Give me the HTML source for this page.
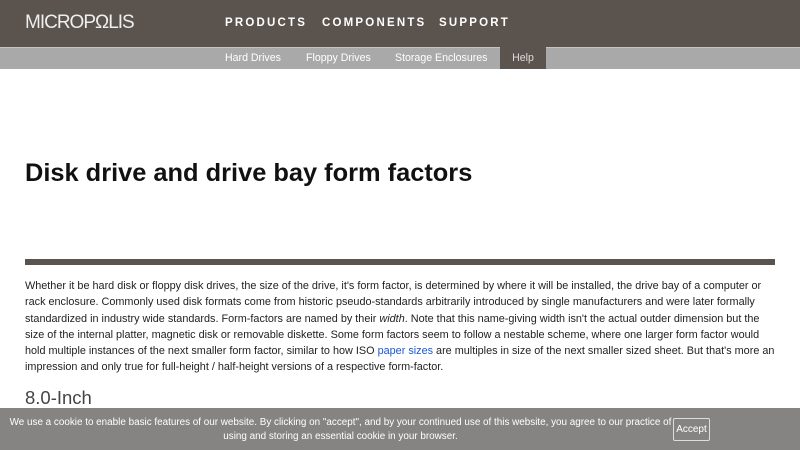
<!DOCTYPE html>
<html><head><meta charset="utf-8"><style>
*{margin:0;padding:0;box-sizing:border-box}
body{width:800px;height:450px;overflow:hidden;background:#fff;font-family:"Liberation Sans",sans-serif;position:relative}
.top{position:absolute;left:0;top:0;width:800px;height:47px;background:#5b534d}
.logo{position:absolute;left:25px;top:12px;color:#eee;font-size:19px;letter-spacing:-1px;font-family:"Liberation Sans",sans-serif}
.nav{position:absolute;top:17px;color:#fff;font-size:11.5px;font-weight:bold;letter-spacing:2.2px}
.sub{position:absolute;left:0;top:47px;width:800px;height:22px;background:#a9a9a9;border-top:1px solid #c4c4c4}
.sub span{position:absolute;top:4px;color:#fff;font-size:10.6px}
.help{position:absolute;left:500px;top:47px;width:46px;height:22px;background:#5b534d;color:#ddd;font-size:10.6px;text-align:center;padding-top:5px}
h1{position:absolute;left:25px;top:159px;font-size:25.4px;font-weight:bold;color:#111}
.rule{position:absolute;left:25px;top:259px;width:750px;height:6px;background:#5b534d}
.txt{position:absolute;left:25px;top:278px;font-size:10.85px;line-height:16.3px;color:#222;white-space:nowrap}
.txt a{color:#1a57d6;text-decoration:none}
h2{position:absolute;left:25px;top:387px;font-size:18.5px;font-weight:normal;color:#444}
.cookie{position:absolute;left:0;top:408px;width:800px;height:42px;background:#858482}
.ct{position:absolute;left:0;width:681px;top:8px;text-align:center;color:#fff;font-size:9.9px;line-height:14px}
.acc{position:absolute;left:673px;top:10px;width:37px;height:23px;border:1px solid #ddd;border-radius:2px;color:#fff;font-size:10px;text-align:center;padding-top:5px}
</style></head><body>
<div class="top"><div class="logo">MICROPΩLIS</div>
<div class="nav" style="left:225px">PRODUCTS</div>
<div class="nav" style="left:322px">COMPONENTS</div>
<div class="nav" style="left:439px">SUPPORT</div></div>
<div class="sub"><span style="left:225px">Hard Drives</span><span style="left:306px">Floppy Drives</span><span style="left:395px">Storage Enclosures</span></div>
<div class="help">Help</div>
<h1>Disk drive and drive bay form factors</h1>
<div class="rule"></div>
<div class="txt">Whether it be hard disk or floppy disk drives, the size of the drive, it's form factor, is determined by where it will be installed, the drive bay of a computer or<br>rack enclosure. Commonly used disk formats come from historic pseudo-standards arbitrarily introduced by single manufacturers and were later formally<br>standardized in industry wide standards. Form-factors are named by their <i>width</i>. Note that this name-giving width isn't the actual outder dimension but the<br>size of the internal platter, magnetic disk or removable diskette. Some form factors seem to follow a nestable scheme, where one larger form factor would<br>hold multiple instances of the next smaller form factor, similar to how ISO <a>paper sizes</a> are multiples in size of the next smaller sized sheet. But that's more an<br>impression and only true for full-height / half-height versions of a respective form-factor.</div>
<h2>8.0-Inch</h2>
<div class="cookie"><div class="ct">We use a cookie to enable basic features of our website. By clicking on "accept", and by your continued use of this website, you agree to our practice of<br>using and storing an essential cookie in your browser.</div><div class="acc">Accept</div></div>
</body></html>
